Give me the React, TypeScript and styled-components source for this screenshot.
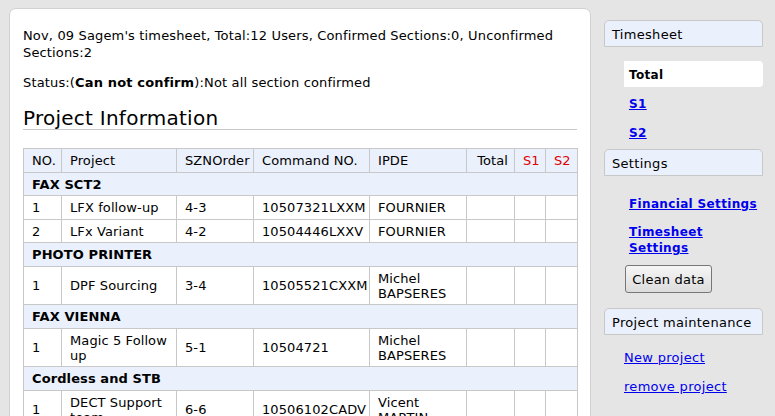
import React from "react";
import styled, { createGlobalStyle } from "styled-components";

const Global = createGlobalStyle`
  html, body { margin: 0; padding: 0; }
  body {
    background: #e5e5e5;
    font-family: "DejaVu Sans", Verdana, sans-serif;
    color: #000;
    overflow: hidden;
  }
`;

const Page = styled.div`
  display: flex;
  align-items: flex-start;
  padding: 8px 0 0 9px;
  height: 408px;
  overflow: hidden;
`;

const Main = styled.main`
  width: 582px;
  box-sizing: border-box;
  background: #fff;
  border: 1px solid #d2d2d2;
  border-radius: 7px 7px 0 0;
  padding: 18px 13px 20px;
  min-height: 430px;
`;

const Para = styled.p<{ $gap?: number }>`
  margin: 0 0 ${(p) => p.$gap ?? 0}px;
  font-size: 13px;
  letter-spacing: 0.15px;
  line-height: 17px;
`;

const Heading = styled.h2`
  margin: 16px 0 18px;
  font-size: 20px;
  letter-spacing: 0.25px;
  font-weight: normal;
  line-height: 22px;
  border-bottom: 1px solid #c8c8c8;
`;

const Table = styled.table`
  width: 554px;
  border-collapse: collapse;
  table-layout: fixed;
  font-size: 13px;
  letter-spacing: 0.1px;
  line-height: 15px;
  border: 1px solid #c8c8c8;
`;

const Th = styled.th<{ $red?: boolean; $right?: boolean }>`
  background: #eaf0fc;
  font-weight: normal;
  text-align: ${(p) => (p.$right ? "right" : "left")};
  color: ${(p) => (p.$red ? "#e00000" : "#000")};
  padding: 4px 6px 3.5px 8px;
  border: 1px solid #c8c8c8;
  white-space: nowrap;
`;

const GroupCell = styled.td`
  background: #eaf0fc;
  font-weight: bold;
  padding: 4px 8px 3.5px;
  border: 1px solid #c8c8c8;
`;

const Td = styled.td`
  padding: 4px 4px 3.5px 8px;
  border: 1px solid #c8c8c8;
  vertical-align: middle;
`;

const Side = styled.aside`
  width: 159px;
  margin-left: 13px;
  padding-top: 12px;
  display: flex;
  flex-direction: column;
`;

const SideHeader = styled.div<{ $mt?: number }>`
  box-sizing: border-box;
  height: 27px;
  margin-top: ${(p) => p.$mt ?? 0}px;
  background: #eaf0fc;
  border: 1px solid #c8c8c8;
  border-radius: 5px 5px 0 0;
  padding: 2px 0 0 7px;
  font-size: 13px;
  letter-spacing: 0.3px;
  line-height: 24px;
  white-space: nowrap;
`;

const NavList = styled.ul<{ $mt: number }>`
  list-style: none;
  margin: ${(p) => p.$mt}px 0 0 20px;
  padding: 0;
  display: flex;
  flex-direction: column;
  gap: 3px;
`;

const NavItem = styled.li<{ $active?: boolean; $tall?: boolean }>`
  box-sizing: border-box;
  min-height: 26px;
  padding: ${(p) => (p.$tall ? "5px 0 5px 5px" : "1px 0 0 5px")};
  display: flex;
  align-items: center;
  background: ${(p) => (p.$active ? "#fff" : "transparent")};
  border-radius: 0 4px 4px 0;
  font-size: 12px;
  letter-spacing: 0.35px;
  font-weight: bold;
  line-height: 16px;
`;

const NavLink = styled.a`
  color: #0000ee;
  text-decoration: underline;
  cursor: pointer;
`;

const Button = styled.button`
  margin: 4px 0 0 21px;
  width: 87px;
  height: 28px;
  box-sizing: border-box;
  border: 1px solid #777;
  border-radius: 3px;
  background: linear-gradient(#f6f6f6, #dcdcdc);
  font-family: "DejaVu Sans", Verdana, sans-serif;
  font-size: 13px;
  letter-spacing: 0.2px;
  color: #000;
  padding: 0;
  align-self: flex-start;
`;

const PlainList = styled.ul`
  list-style: none;
  margin: 14px 0 0 20px;
  padding: 0;
  display: flex;
  flex-direction: column;
  gap: 12px;
`;

const PlainItem = styled.li`
  font-size: 13px;
  letter-spacing: 0.3px;
  line-height: 17px;
`;

type Row = { no: string; project: string; order: string; cmd: string; ipde: string };
type Group = { name: string; rows: Row[] };

const groups: Group[] = [
  {
    name: "FAX SCT2",
    rows: [
      { no: "1", project: "LFX follow-up", order: "4-3", cmd: "10507321LXXM", ipde: "FOURNIER" },
      { no: "2", project: "LFx Variant", order: "4-2", cmd: "10504446LXXV", ipde: "FOURNIER" },
    ],
  },
  {
    name: "PHOTO PRINTER",
    rows: [{ no: "1", project: "DPF Sourcing", order: "3-4", cmd: "10505521CXXM", ipde: "Michel BAPSERES" }],
  },
  {
    name: "FAX VIENNA",
    rows: [{ no: "1", project: "Magic 5 Follow up", order: "5-1", cmd: "10504721", ipde: "Michel BAPSERES" }],
  },
  {
    name: "Cordless and STB",
    rows: [{ no: "1", project: "DECT Support team", order: "6-6", cmd: "10506102CADV", ipde: "Vicent MARTIN" }],
  },
];

const widths = [38, 115, 77, 116, 97, 48, 31, 32];

export default function App() {
  return (
    <>
      <Global />
      <Page>
        <Main>
          <Para $gap={13}>
            Nov, 09 Sagem's timesheet, Total:12 Users, Confirmed Sections:0, Unconfirmed Sections:2
          </Para>
          <Para>
            Status:(<b>Can not confirm</b>):Not all section confirmed
          </Para>
          <Heading>Project Information</Heading>
          <Table>
            <colgroup>
              {widths.map((w, i) => (
                <col key={i} style={{ width: w }} />
              ))}
            </colgroup>
            <thead>
              <tr>
                <Th>NO.</Th>
                <Th>Project</Th>
                <Th>SZNOrder</Th>
                <Th>Command NO.</Th>
                <Th>IPDE</Th>
                <Th $right>Total</Th>
                <Th $red>S1</Th>
                <Th $red>S2</Th>
              </tr>
            </thead>
            <tbody>
              {groups.map((g) => (
                <React.Fragment key={g.name}>
                  <tr>
                    <GroupCell colSpan={8}>{g.name}</GroupCell>
                  </tr>
                  {g.rows.map((r, i) => (
                    <tr key={i}>
                      <Td>{r.no}</Td>
                      <Td>{r.project}</Td>
                      <Td>{r.order}</Td>
                      <Td>{r.cmd}</Td>
                      <Td>{r.ipde}</Td>
                      <Td />
                      <Td />
                      <Td />
                    </tr>
                  ))}
                </React.Fragment>
              ))}
            </tbody>
          </Table>
        </Main>
        <Side>
          <SideHeader>Timesheet</SideHeader>
          <NavList $mt={14}>
            <NavItem $active>Total</NavItem>
            <NavItem>
              <NavLink>S1</NavLink>
            </NavItem>
            <NavItem>
              <NavLink>S2</NavLink>
            </NavItem>
          </NavList>
          <SideHeader $mt={4}>Settings</SideHeader>
          <NavList $mt={14}>
            <NavItem>
              <NavLink>Financial Settings</NavLink>
            </NavItem>
            <NavItem $tall>
              <NavLink>Timesheet Settings</NavLink>
            </NavItem>
          </NavList>
          <Button>Clean data</Button>
          <SideHeader $mt={15}>Project maintenance</SideHeader>
          <PlainList>
            <PlainItem>
              <NavLink>New project</NavLink>
            </PlainItem>
            <PlainItem>
              <NavLink>remove project</NavLink>
            </PlainItem>
          </PlainList>
        </Side>
      </Page>
    </>
  );
}
